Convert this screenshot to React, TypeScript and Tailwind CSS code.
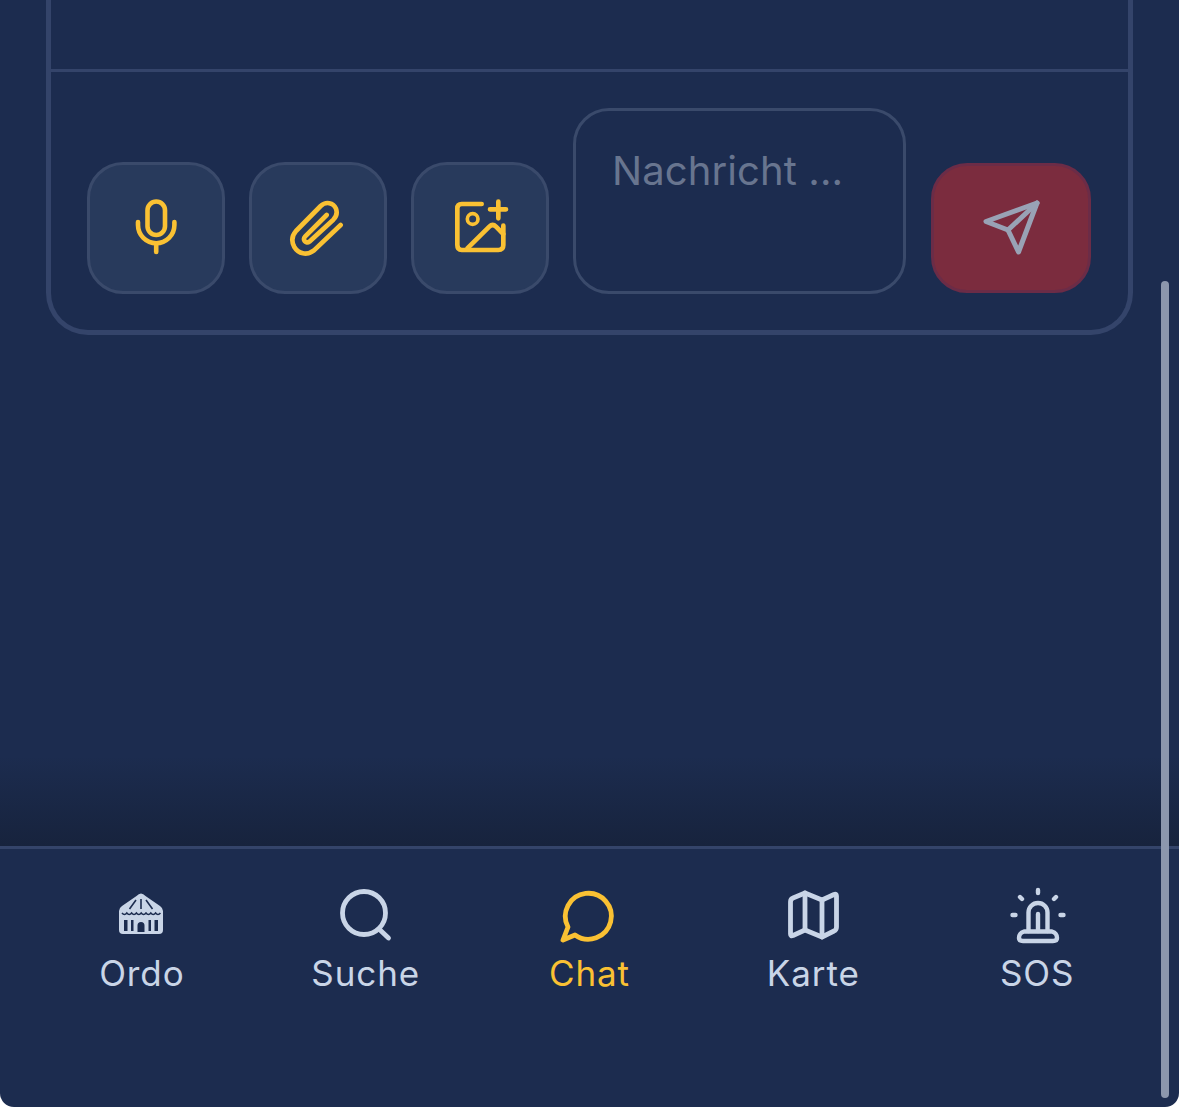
import React from "react";

const iconClass = "h-[60px] w-[60px]";
const strokeProps = {
  fill: "none",
  stroke: "currentColor",
  strokeLinecap: "round" as const,
  strokeLinejoin: "round" as const,
};

const MicIcon = () => (
  <svg viewBox="126 198 60 60" className={iconClass} {...strokeProps} strokeWidth={4.6}>
    <rect x="147.5" y="201.5" width="17.5" height="33.5" rx="8.75" />
    <path d="M138 222v3a18.2 18.2 0 0 0 36.4 0v-3" />
    <path d="M156.2 243.5V252" />
  </svg>
);

const ClipIcon = () => (
  <svg viewBox="684 171 180 180" className={iconClass} {...strokeProps} strokeWidth={14}>
    <path d="M842 252L762 328C740 345 715 338 703 318C693 300 695 285 708 270L782 195C798 180 820 185 828 203C833 217 828 228 820 236L748 302C738 310 726 296 735 287L800 222" />
  </svg>
);

const ImagePlusIcon = () => (
  <svg viewBox="1170 174 180 180" className={iconClass} {...strokeProps} strokeWidth={14}>
    <path d="M1265 192H1205Q1192 192 1192 205V315Q1192 330 1205 330H1315Q1330 330 1330 315V257" />
    <circle cx="1238" cy="237" r="16" strokeWidth={11} />
    <path d="M1222 325L1288 260Q1298 250 1308 260L1330 282" />
    <path d="M1315 185V235M1290 208H1338" />
  </svg>
);

const PlaneIcon = () => (
  <svg viewBox="981 198 60 60" className={iconClass} {...strokeProps} strokeWidth={5}>
    <path d="M1037 203L986 221.5L1008 230L1018.5 252Z" />
    <path d="M1037 203L1008 230" />
  </svg>
);

const TentIcon = () => (
  <svg viewBox="112 885 60 60" className={iconClass}>
    <path
      fill="currentColor"
      d="M136.5 896Q141 891 145.500 896L160 906Q163 908 163 911V930Q163 934 159 934H123Q119 934 119 930V911Q119 908 122 906Z"
    />
    <g fill="none" stroke="#1c2c4f" strokeWidth={1.6}>
      <path d="M136 900L129.500 909M141 899V909M146 900L152.500 909" />
      <path d="M122 913q2.400 3 4.800 0q2.400 3 4.800 0q2.400 3 4.800 0q2.400 3 4.800 0q2.400 3 4.800 0q2.400 3 4.800 0q2.400 3 4.800 0q2.400 3 4.800 0" />
    </g>
    <g fill="#1c2c4f">
      <rect x="124" y="920" width="3.500" height="11" />
      <path d="M131 931V920H133.500V931ZM148.500 931V920H151V931Z" />
      <rect x="154.500" y="920" width="3.500" height="11" />
      <path d="M137.500 932V925.500a3.500 3.500 0 0 1 7 0V932Z" />
    </g>
  </svg>
);

const SearchIcon = () => (
  <svg viewBox="336 885 60 60" className={iconClass} {...strokeProps} strokeWidth={4.8}>
    <circle cx="364" cy="913" r="21.500" />
    <path d="M379 929L388.500 938" />
  </svg>
);

const ChatIcon = () => (
  <svg viewBox="559 885 60 60" className={iconClass} {...strokeProps} strokeWidth={4.8}>
    <path d="M575 935A23 23 0 1 0 568 927L563 940L575 935Z" />
  </svg>
);

const MapIcon = () => (
  <svg viewBox="783 885 60 60" className={iconClass} {...strokeProps} strokeWidth={4.8}>
    <path d="M790.500 902Q790.500 899 793 898L805 893L822 900L834 894.500Q836.500 893.500 836.500 896V927Q836.500 930 834 931L822 937L805 930L793 935.500Q790.500 936.500 790.500 934Z" />
    <path d="M805 893V930M822 900V937" />
  </svg>
);

const SirenIcon = () => (
  <svg viewBox="1007 885 60 60" className={iconClass} {...strokeProps} strokeWidth={4.4}>
    <path d="M1028.500 931V912.500a9.500 9.500 0 0 1 19 0V931" />
    <path d="M1038 914V931" />
    <path d="M1024 931.500H1052Q1057 933 1057 938Q1057 941 1053 941H1023Q1019 941 1019 938Q1019 933 1024 931.500Z" />
    <path d="M1038 890V893M1020 897L1022 899M1056 897L1054 899M1012.500 915H1015.500M1060.500 915H1063.500" />
  </svg>
);

const navItems = [
  { label: "Ordo", icon: <TentIcon />, active: false },
  { label: "Suche", icon: <SearchIcon />, active: false },
  { label: "Chat", icon: <ChatIcon />, active: true },
  { label: "Karte", icon: <MapIcon />, active: false },
  { label: "SOS", icon: <SirenIcon />, active: false },
];

const tools = [<MicIcon key="mic" />, <ClipIcon key="clip" />, <ImagePlusIcon key="image" />];

export default function App() {
  return (
    <div className="h-[1107px] w-full overflow-hidden bg-white font-['Inter',sans-serif]">
      <div className="relative flex h-full flex-col overflow-hidden rounded-b-[14px] bg-[#1c2c4f]">
        <main className="flex min-h-0 flex-1 flex-col">
          <section className="mx-[46px] rounded-b-[42px] border-x-[5px] border-b-[5px] border-[#34446a]">
            <div className="h-[72px] border-b-[3px] border-[#34446a]" />
            <div className="flex items-end pb-[36px] pl-[36px] pt-[36px]">
              <div className="flex gap-[24px]">
                {tools.map((icon, index) => (
                  <button
                    key={index}
                    className="flex h-[132px] w-[138px] items-center justify-center rounded-[36px] border-[3px] border-[#3a4a6b] bg-[#283a5c] text-[#fac133]"
                  >
                    {icon}
                  </button>
                ))}
              </div>
              <div className="ml-[24px] h-[186px] w-[333px] rounded-[36px] border-[3px] border-[#3a4a6b] px-[36px] py-[35px] text-[40px] leading-[50px] tracking-[0.1px] text-[#68758f]">
                Nachricht ...
              </div>
              <button className="mb-[1px] ml-[25px] flex h-[130px] w-[160px] items-center justify-center rounded-[36px] border-[3px] border-[#6b2c47] bg-[#7b2c3e] text-[#99a2b5]">
                <PlaneIcon />
              </button>
            </div>
          </section>
          <div className="mt-auto h-[90px] bg-gradient-to-b from-transparent to-[#17233d]" />
        </main>
        <nav className="grid h-[261px] grid-cols-5 border-t-[3px] border-[#34446a] px-[30px] pt-[36px]">
          {navItems.map((item) => (
            <div
              key={item.label}
              className={`flex flex-col items-center ${item.active ? "text-[#fac133]" : "text-[#c9d5e7]"}`}
            >
              {item.icon}
              <span className="text-[35px] leading-[56px] tracking-[0.9px]">{item.label}</span>
            </div>
          ))}
        </nav>
        <div className="absolute bottom-[9px] right-[10px] h-[817px] w-[8px] rounded-full bg-[#8c97ad]" />
      </div>
    </div>
  );
}
